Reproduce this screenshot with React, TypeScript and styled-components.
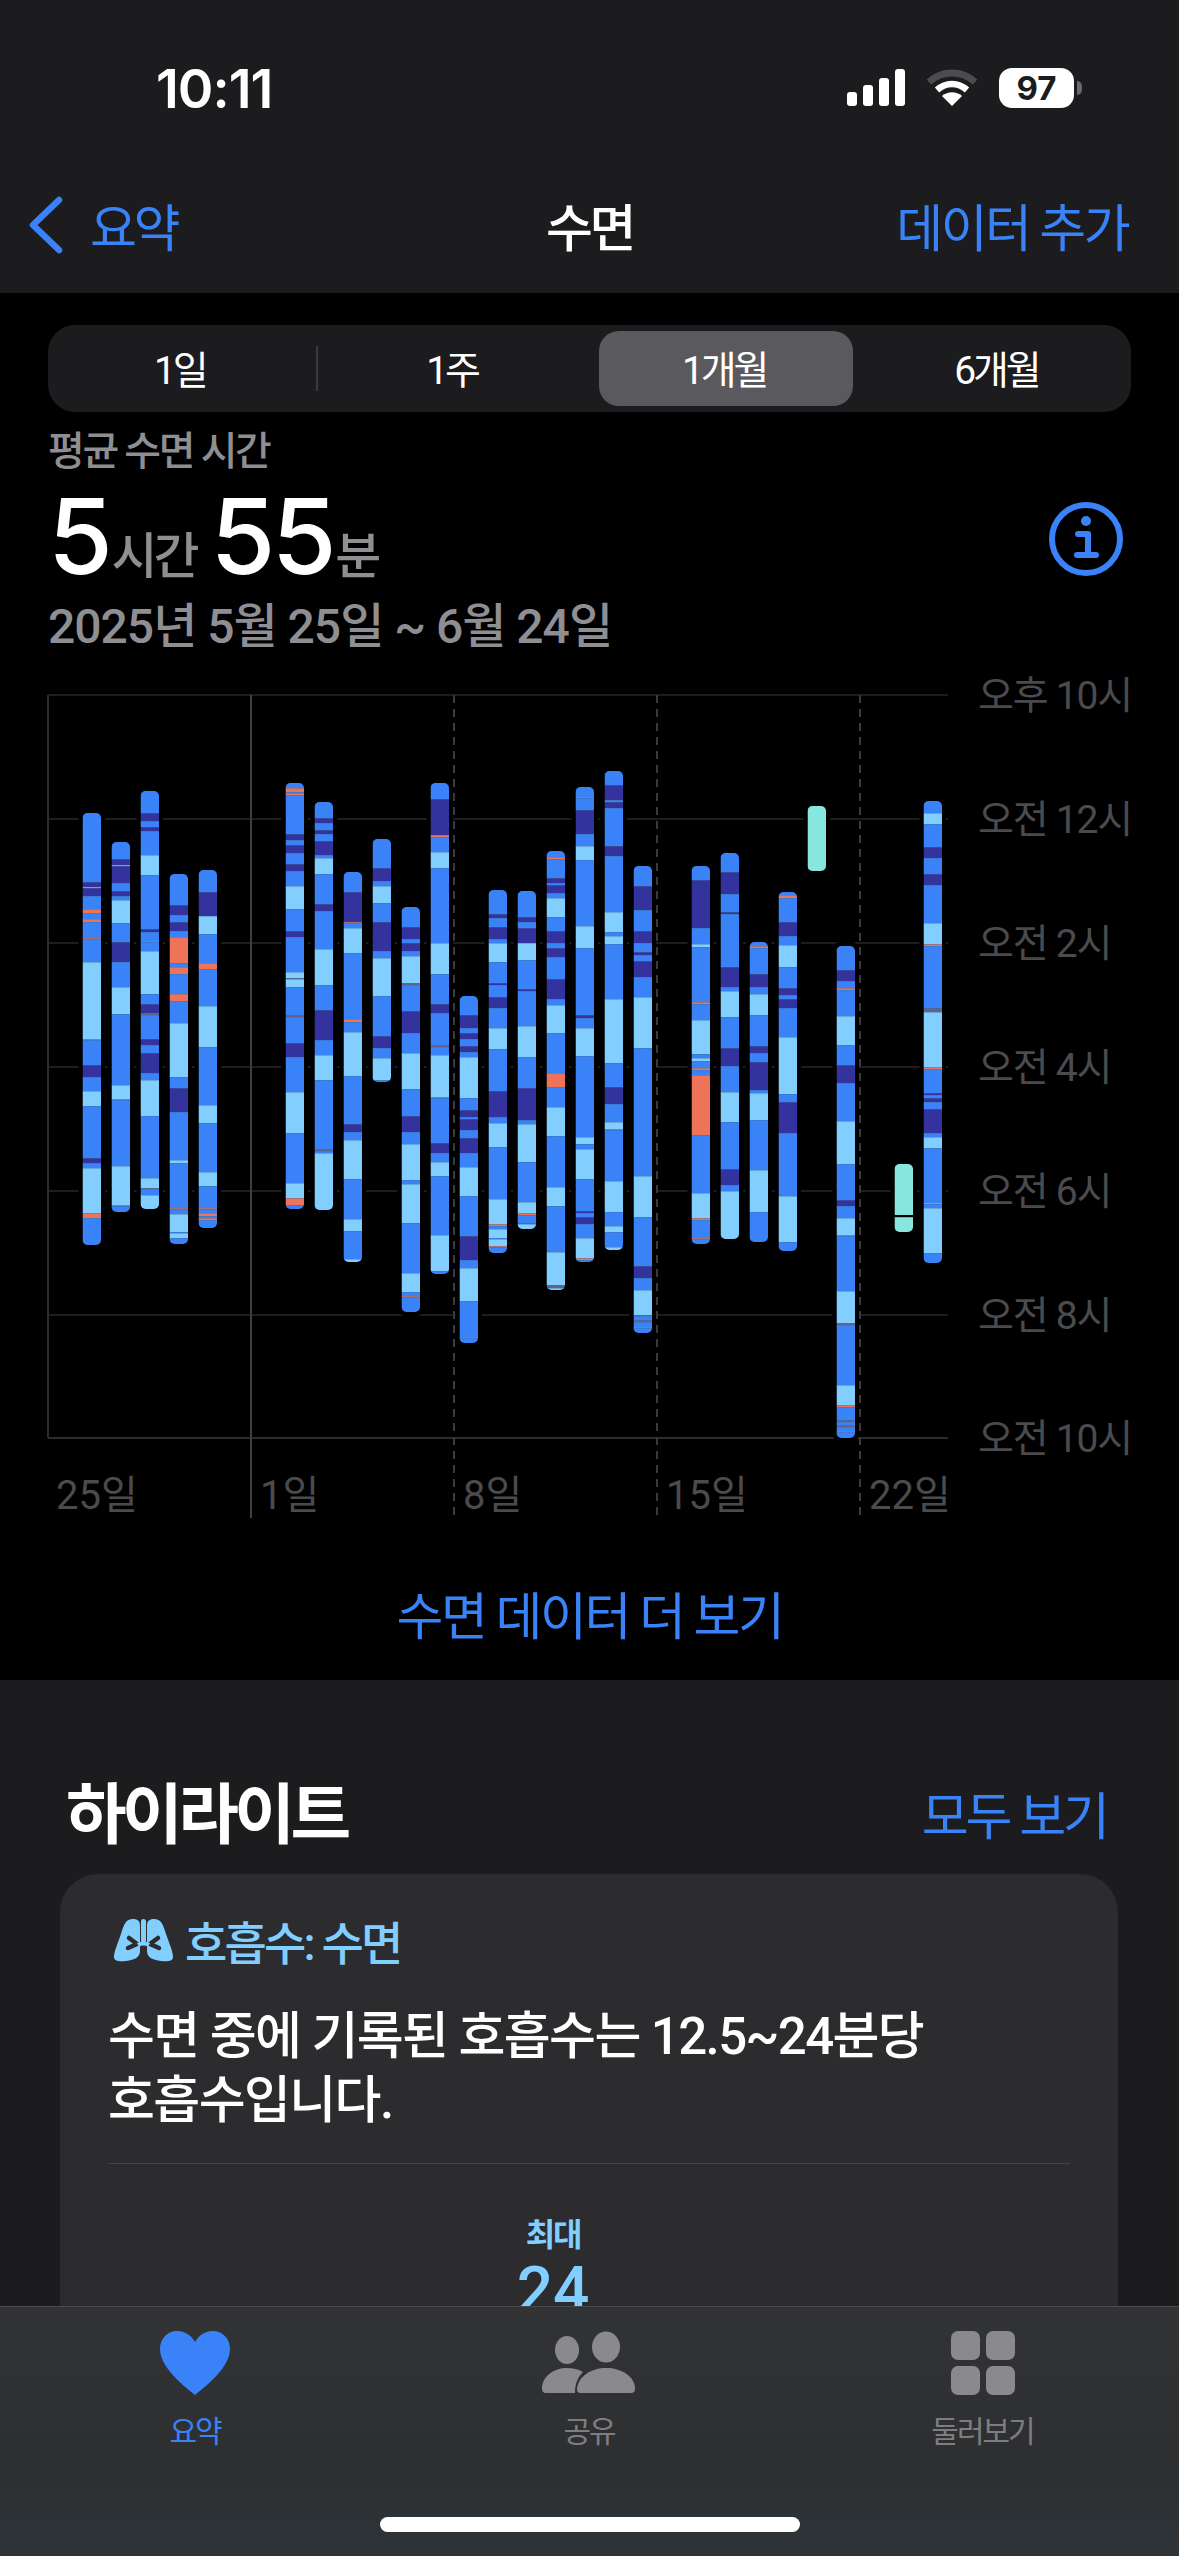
import React from "react";
import styled, { createGlobalStyle } from "styled-components";

const GlobalStyle = createGlobalStyle`
  html, body { margin: 0; padding: 0; background: #000; }
  body { font-family: Roboto, "Noto Sans CJK KR", sans-serif; }
`;

const BLUE = "#3a82f7";
const SKY = "#82cefe";

const Screen = styled.div`
  position: relative;
  width: 1179px;
  height: 2556px;
  overflow: hidden;
  background: #1c1c1e;
  color: #fff;
`;

const TopChrome = styled.header`
  height: 293px;
  background: #1c1c1e;
  box-sizing: border-box;
  padding-top: 62px;
`;
const StatusBar = styled.div`
  display: flex;
  align-items: center;
  justify-content: space-between;
  height: 52px;
  padding: 0 98px 0 156px;
`;
const Clock = styled.span`
  font-family: Inter, Roboto, sans-serif;
  font-size: 54px;
  font-weight: 600;
  letter-spacing: -1px;
`;
const StatusIcons = styled.div`
  display: flex;
  align-items: center;
  gap: 21px;
`;
const Battery = styled.div`
  position: relative;
  width: 75px;
  height: 40px;
  border-radius: 13px;
  background: #fff;
  color: #1c1c1e;
  font-family: Inter, sans-serif;
  font-size: 33px;
  font-weight: 700;
  line-height: 40px;
  text-align: center;
  margin-right: 7px;
  &::after {
    content: "";
    position: absolute;
    right: -8px;
    top: 13px;
    width: 5px;
    height: 14px;
    border-radius: 0 6px 6px 0;
    background: #6a6a6c;
  }
`;
const NavBar = styled.nav`
  display: grid;
  grid-template-columns: 1fr auto 1fr;
  align-items: center;
  margin-top: 74px;
  padding: 0 51px;
  height: 62px;
`;
const NavBack = styled.a`
  display: flex;
  align-items: center;
  gap: 26px;
  margin-left: -23px;
  color: ${BLUE};
  font-size: 51px;
  letter-spacing: -3.4px;
`;
const NavTitle = styled.span`
  font-size: 51px;
  font-weight: 500;
  letter-spacing: -3.4px;
`;
const NavAction = styled.a`
  justify-self: end;
  color: ${BLUE};
  font-size: 51px;
  letter-spacing: -2.6px;
`;

const Main = styled.main`
  height: 1387px;
  background: #000;
  box-sizing: border-box;
  padding-top: 32px;
`;
const Segments = styled.div`
  display: grid;
  grid-template-columns: repeat(4, 1fr);
  gap: 18px;
  width: 1083px;
  height: 87px;
  box-sizing: border-box;
  margin-left: 48px;
  padding: 6px;
  border-radius: 27px;
  background: #1c1c1e;
`;
const Segment = styled.div<{ $active?: boolean; $divider?: boolean }>`
  position: relative;
  display: flex;
  align-items: center;
  justify-content: center;
  border-radius: 20px;
  padding: 0 3px 3px 0;
  font-size: 39px;
  letter-spacing: -3.2px;
  background: ${(p) => (p.$active ? "#5a5a5e" : "transparent")};
  &::after {
    content: "";
    display: ${(p) => (p.$divider ? "block" : "none")};
    position: absolute;
    right: -10px;
    top: 15px;
    width: 2px;
    height: 45px;
    background: #3a3a3c;
  }
`;
const Summary = styled.section`
  position: relative;
  padding: 15px 48px 0;
`;
const SummaryLabel = styled.div`
  color: #8e8e93;
  font-size: 40px;
  font-weight: 500;
  line-height: 50px;
  letter-spacing: -2.4px;
`;
const Duration = styled.div`
  display: flex;
  align-items: baseline;
  height: 112px;
  line-height: 118px;
`;
const BigNumber = styled.span<{ $gap?: number }>`
  font-family: Inter, Roboto, sans-serif;
  font-size: 105px;
  font-weight: 500;
  margin-left: ${(p) => p.$gap ?? 0}px;
  letter-spacing: -3.5px;
`;
const Unit = styled.span`
  color: #8e8e93;
  font-size: 50px;
  font-weight: 500;
  letter-spacing: -4px;
  margin-left: 2px;
`;
const DateRange = styled.div`
  color: #8e8e93;
  font-size: 48px;
  font-weight: 500;
  line-height: 56px;
  margin-top: 10px;
  letter-spacing: -1px;
`;
const InfoButton = styled.svg`
  position: absolute;
  right: 55px;
  top: 89px;
  width: 76px;
  height: 76px;
`;

const ChartFrame = styled.svg`
  display: block;
  margin-top: 16px;
`;
const AxisText = styled.text<{ $day?: boolean }>`
  fill: #4b4b4d;
  font-size: ${(p) => (p.$day ? 40 : 39)}px;
  letter-spacing: ${(p) => (p.$day ? 0 : -1.2)}px;
`;
const DataLink = styled.a`
  display: block;
  margin-top: 57px;
  text-align: center;
  color: ${BLUE};
  font-size: 51px;
  line-height: 60px;
  letter-spacing: -2.5px;
`;

const Highlights = styled.section`
  padding: 91px 61px 0 60px;
`;
const HighlightHead = styled.div`
  display: flex;
  align-items: center;
  justify-content: space-between;
  height: 76px;
  padding: 0 11px 0 6px;
`;
const HighlightTitle = styled.h2`
  margin: 0;
  font-size: 66px;
  font-weight: 700;
  letter-spacing: -4.6px;
`;
const SeeAll = styled.a`
  color: ${BLUE};
  font-size: 51px;
  letter-spacing: -3px;
  padding-top: 8px;
`;
const Card = styled.article`
  height: 640px;
  margin-top: 27px;
  box-sizing: border-box;
  padding: 44px 48px 0;
  border-radius: 38px;
  background: #2c2c2e;
`;
const CardTag = styled.div`
  display: flex;
  align-items: center;
  gap: 11px;
  height: 44px;
  margin-left: 5px;
  color: ${SKY};
  font-size: 46px;
  font-weight: 500;
  letter-spacing: -2.8px;
`;
const CardBody = styled.p`
  margin: 43px 0 0;
  height: 128px;
  font-size: 51px;
  font-weight: 500;
  line-height: 64px;
  letter-spacing: -1.6px;
  padding-bottom: 30px;
  border-bottom: 1px solid #454547;
`;
const StatBlock = styled.div`
  display: flex;
  flex-direction: column;
  align-items: center;
  width: 890px;
  margin-top: 51px;
  color: ${SKY};
`;
const StatLabel = styled.div`
  font-size: 32px;
  font-weight: 700;
  letter-spacing: -2.2px;
  line-height: 40px;
`;
const StatValue = styled.div`
  font-size: 64px;
  font-weight: 500;
  line-height: 70px;
  margin-top: 1px;
`;

const TabBar = styled.footer`
  position: absolute;
  left: 0;
  right: 0;
  bottom: 0;
  height: 250px;
  box-sizing: border-box;
  padding-top: 24px;
  border-top: 1px solid #4a4a4c;
  background: linear-gradient(180deg, #323335 0%, #2d2f31 60%, #2e3439 100%);
  display: grid;
  grid-template-columns: 390px 398px 389px;
`;
const Tab = styled.div<{ $active?: boolean }>`
  display: flex;
  flex-direction: column;
  align-items: center;
  color: ${(p) => (p.$active ? BLUE : "#7e7e82")};
  font-size: 30px;
  letter-spacing: -2px;
  svg { display: block; margin-bottom: 12px; }
`;
const HomeIndicator = styled.div`
  position: absolute;
  left: 380px;
  bottom: 24px;
  width: 420px;
  height: 15px;
  border-radius: 8px;
  background: #fff;
`;

const STAGE: Record<string, string> = {
  B: "#3a82f7",
  L: "#82cefe",
  D: "#34329c",
  R: "#ef7358",
  G: "#5f6390",
  T: "#87e6dd",
  K: "#000",
};

// one night per entry: day index, bedtime y, then stage + the y where it ends
const NIGHTS: [number, number, string][] = [
  [0, 812, "B881 D886 L887 D895 B908 R912 B918 R921 B937 R938 B961 L1038 R1039 B1064 D1076 B1090 L1105 B1157 D1162 B1167 L1212 R1217 B1244"],
  [1, 841, "B858 D864 L865 D882 B890 D895 B899 L922 B941 D961 B986 L1013 B1084 L1098 R1099 B1165 L1204 R1205 B1211"],
  [2, 790, "B812 D820 B826 D830 B854 L874 B928 D931 B940 R941 B950 L993 B1003 D1012 G1014 B1038 D1044 B1052 D1072 B1079 L1115 B1177 L1187 G1188 B1194 L1208"],
  [3, 873, "B904 D914 B921 D930 B936 R962 B966 R973 B993 R1000 B1022 L1076 B1087 D1111 B1159 L1162 B1207 R1208 B1213 L1231 B1232 L1237 B1243"],
  [4, 869, "B891 D915 L933 B962 R968 B1005 L1046 B1104 L1122 B1171 L1185 B1207 R1208 B1212 R1215 B1217 R1219 B1227"],
  [7, 782, "B787 R791 B792 R794 B833 D839 B844 D852 B863 D870 B885 L908 B930 D936 B971 L977 G978 L986 B1014 G1016 B1042 D1056 B1091 L1132 B1182 L1197 R1204 B1208"],
  [8, 801, "B817 D822 B829 D833 B840 D854 B857 L873 B903 D910 B948 L984 B1009 D1039 B1054 L1079 B1148 G1150 B1152 L1209"],
  [9, 871, "B891 D921 R922 B927 L952 B1018 R1021 B1031 L1075 B1123 D1131 B1139 L1178 B1218 L1230 B1258 L1261"],
  [10, 838, "B867 D880 B885 L902 B921 D950 B957 L995 B1035 D1047 B1057 L1079 B1081"],
  [11, 906, "B926 D938 B942 D950 B955 L982 G984 B1010 D1032 B1052 L1088 B1115 D1131 B1143 L1179 B1183 L1222 B1272 L1291 B1295 R1296 B1311"],
  [12, 782, "B798 D834 R836 B851 L867 B942 L973 B1003 D1012 B1044 G1046 B1054 L1096 R1097 B1142 D1152 B1161 L1175 B1234 L1270 B1273"],
  [13, 995, "B1014 D1027 B1032 D1038 B1045 D1051 B1056 L1097 B1109 D1116 B1118 D1129 B1137 D1152 B1166 L1195 B1235 D1259 B1267 L1300 B1336 R1337 B1342"],
  [14, 889, "B913 D917 B926 D938 B942 L961 B982 D984 B996 D1007 B1027 L1048 B1090 D1116 B1122 L1146 B1198 L1223 R1225 B1228 L1237 B1238 L1245 R1246 B1252"],
  [15, 890, "B916 D921 B927 D942 L959 B988 D990 B1025 L1056 B1087 D1119 B1123 L1161 B1201 L1212 R1214 B1222 G1223 L1228"],
  [16, 850, "B856 R858 B877 D882 B884 D892 B897 L916 B930 D942 B947 D956 B978 D998 B1004 L1032 B1072 R1086 B1106 L1135 B1186 L1205 B1251 L1284 G1287 L1289"],
  [17, 786, "B796 R797 B809 D833 B845 L859 B925 L947 B1014 D1017 B1027 L1055 B1136 L1143 B1148 L1178 B1210 D1212 B1216 D1223 B1237 L1257 R1259 B1261"],
  [18, 770, "B784 D799 B801 D807 B845 D855 B911 L931 B935 L943 B998 L1062 B1086 D1103 B1121 L1128 R1129 B1180 L1211 B1225 L1231 B1246 L1249"],
  [19, 865, "B885 D909 B930 D942 B951 D954 B960 D976 B996 L1047 B1175 L1216 B1265 D1277 B1289 L1314 G1315 B1319 G1321 B1326 R1327 B1332"],
  [21, 865, "B879 D927 B943 L946 B1001 R1003 B1019 L1053 B1057 L1060 B1067 R1069 B1074 R1134 B1192 L1217 R1219 B1237 R1238 B1243"],
  [22, 852, "B871 D893 B911 D913 B966 D986 B990 L1016 B1047 D1065 B1091 L1121 B1168 D1184 B1190 L1238"],
  [23, 941, "B945 R947 B973 D986 B993 L1014 B1045 D1052 B1061 D1089 B1092 L1119 B1169 L1211 B1241"],
  [24, 891, "B894 R897 B921 D935 B944 L966 B987 D994 B998 D1007 B1036 L1093 B1101 D1132 B1195 L1241 B1250"],
  [25, 805, "T870"],
  [26, 945, "B969 D980 B987 R989 B1015 L1044 B1064 D1082 B1120 L1163 B1199 D1205 B1217 L1234 R1235 B1290 L1322 G1324 B1384 L1404 R1406 B1419 G1421 B1424 G1426 B1430 R1431 B1437"],
  [28, 1163, "T1214 K1216 T1231"],
  [29, 800, "B812 L823 B846 D857 B873 D884 B922 L943 R945 B1007 G1011 L1066 R1068 B1092 D1094 B1097 D1101 B1108 D1132 B1136 L1147 B1202 L1203 B1207 L1252 B1262"],
];

const HOUR_LINES: [number, string][] = [
  [694, "오후 10시"],
  [818, "오전 12시"],
  [942, "오전 2시"],
  [1066, "오전 4시"],
  [1190, "오전 6시"],
  [1314, "오전 8시"],
  [1437, "오전 10시"],
];
const DAY_TICKS: [number, string, boolean][] = [
  [48, "25일", false],
  [251, "1일", true],
  [454, "8일", false],
  [657, "15일", false],
  [860, "22일", false],
];

const BAR_W = 18.5;
const dayX = (day: number) => 82.5 + day * 29;

function NightBar({ day, top, stages }: { day: number; top: number; stages: string }) {
  const x = dayX(day);
  const parts = stages.split(" ").map((s) => ({ code: s[0], end: Number(s.slice(1)) }));
  const bottom = parts[parts.length - 1].end;
  const clipId = `night-${day}`;
  let y = top;
  return (
    <g>
      <rect x={x - 4} y={top - 4} width={BAR_W + 8} height={bottom - top + 8} rx={8} fill="#000" />
      <clipPath id={clipId}>
        <rect x={x} y={top} width={BAR_W} height={bottom - top} rx={5} />
      </clipPath>
      <g clipPath={`url(#${clipId})`}>
        {parts.map((p, i) => {
          const from = y;
          y = p.end;
          return (
            <g key={i}>
              <rect x={x} y={from} width={BAR_W} height={p.end - from} fill={STAGE[p.code]} />
              {i > 0 && p.code !== "K" && (
                <rect x={x} y={from} width={BAR_W} height={1} fill="#3d6f9e" opacity={0.4} />
              )}
            </g>
          );
        })}
      </g>
    </g>
  );
}

function SleepChart() {
  return (
    <ChartFrame width={1179} height={860} viewBox="0 670 1179 860">
      {HOUR_LINES.map(([y, label], i) => (
        <g key={label}>
          <line x1={48} x2={948} y1={y} y2={y} stroke={i === 6 ? "#2c2c2e" : "#1d1d1f"} strokeWidth={2} />
          <AxisText x={978} y={y + 14}>{label}</AxisText>
        </g>
      ))}
      <line x1={48} x2={48} y1={694} y2={1437} stroke="#2c2c2e" strokeWidth={2} />
      {DAY_TICKS.map(([x, label, solid]) => (
        <g key={label}>
          {x !== 48 && (
            <line
              x1={x}
              x2={x}
              y1={694}
              y2={1517}
              stroke={solid ? "#3f3f41" : "#3a3a3c"}
              strokeWidth={2}
              strokeDasharray={solid ? undefined : "8 6"}
            />
          )}
          <AxisText $day x={x === 48 ? 56 : x + 9} y={1508}>{label}</AxisText>
        </g>
      ))}
      {NIGHTS.map(([day, top, stages]) => (
        <NightBar key={day} day={day} top={top} stages={stages} />
      ))}
    </ChartFrame>
  );
}

const SignalIcon = () => (
  <svg width="58" height="38" viewBox="0 0 58 38" fill="#fff">
    <rect x="0" y="23" width="10" height="14" rx="3" />
    <rect x="16" y="16" width="10" height="21" rx="3" />
    <rect x="32" y="9" width="10" height="28" rx="3" />
    <rect x="48" y="0" width="10" height="37" rx="3" />
  </svg>
);

const WifiIcon = () => (
  <svg width="52" height="38" viewBox="0 0 52 38" fill="none">
    <path d="M3 13 C16 1 36 1 49 13" stroke="#4c4c4e" strokeWidth="7" />
    <path d="M11 21 C20 13 32 13 41 21" stroke="#fff" strokeWidth="6.5" />
    <path d="M26 37 L16 27 C22 22 30 22 36 27 Z" fill="#fff" />
  </svg>
);

const LungIcon = () => (
  <svg width="61" height="44" viewBox="0 0 61 44">
    <path
      d="M20 1 C13 1 11 6 8 16 C5 25 1 33 1 39 C1 43 6 44 13 43 C22 42 27 39 27 33 L27 8 C27 3 25 1 20 1 Z"
      fill="#82cefe"
    />
    <path
      d="M41 1 C48 1 50 6 53 16 C56 25 60 33 60 39 C60 43 55 44 48 43 C39 42 34 39 34 33 L34 8 C34 3 36 1 41 1 Z"
      fill="#82cefe"
    />
    <rect x="28" y="1" width="5" height="24" rx="2.5" fill="#82cefe" />
    <path d="M16 20 L24 26 L15 30" fill="none" stroke="#2c2c2e" strokeWidth="4.5" strokeLinecap="round" />
    <path d="M45 20 L37 26 L46 30" fill="none" stroke="#2c2c2e" strokeWidth="4.5" strokeLinecap="round" />
    <path d="M25 27 C28 25 33 25 36 27" fill="none" stroke="#82cefe" strokeWidth="4" />
  </svg>
);

const HeartIcon = () => (
  <svg width="70" height="64" viewBox="0 0 70 64" fill={BLUE}>
    <path d="M35 64 C28 58 0 38 0 18 C0 7 8 0 17 0 C25 0 31 4 35 11 C39 4 45 0 53 0 C62 0 70 7 70 18 C70 38 42 58 35 64 Z" />
  </svg>
);

const PeopleIcon = () => (
  <svg width="94" height="64" viewBox="0 0 94 64" fill="#8a8a8e">
    <ellipse cx="25" cy="19" rx="12" ry="14" />
    <ellipse cx="64" cy="16" rx="14" ry="15.5" />
    <path d="M0 58 C0 45 12 37 25 37 C31 37 36 38 41 41 C36 46 33 52 33 62 L4 62 C1 62 0 60 0 58 Z" />
    <path d="M35 58 C36 45 50 37 64 37 C79 37 93 45 93 58 C93 61 91 62 89 62 L39 62 C36 62 35 61 35 58 Z" />
  </svg>
);

const BrowseIcon = () => (
  <svg width="64" height="64" viewBox="0 0 64 64" fill="#8a8a8e">
    <rect x="0" y="0" width="29" height="29" rx="7" />
    <rect x="35" y="0" width="29" height="29" rx="7" />
    <rect x="0" y="35" width="29" height="29" rx="7" />
    <rect x="35" y="35" width="29" height="29" rx="7" />
  </svg>
);

export default function App() {
  return (
    <>
      <GlobalStyle />
      <Screen>
        <TopChrome>
          <StatusBar>
            <Clock>10:11</Clock>
            <StatusIcons>
              <SignalIcon />
              <WifiIcon />
              <Battery>97</Battery>
            </StatusIcons>
          </StatusBar>
          <NavBar>
            <NavBack>
              <svg width="36" height="58" viewBox="0 0 36 58" fill="none">
                <path d="M31 4 L5 29 L31 54" stroke={BLUE} strokeWidth="6.5" strokeLinecap="round" strokeLinejoin="round" />
              </svg>
              요약
            </NavBack>
            <NavTitle>수면</NavTitle>
            <NavAction>데이터 추가</NavAction>
          </NavBar>
        </TopChrome>

        <Main>
          <Segments>
            <Segment $divider>1일</Segment>
            <Segment>1주</Segment>
            <Segment $active>1개월</Segment>
            <Segment>6개월</Segment>
          </Segments>

          <Summary>
            <SummaryLabel>평균 수면 시간</SummaryLabel>
            <Duration>
              <BigNumber>5</BigNumber>
              <Unit>시간</Unit>
              <BigNumber $gap={15}>55</BigNumber>
              <Unit>분</Unit>
            </Duration>
            <DateRange>2025년 5월 25일 ~ 6월 24일</DateRange>
            <InfoButton viewBox="0 0 76 76" fill="none">
              <circle cx="38" cy="38" r="34" stroke={BLUE} strokeWidth="6" />
              <circle cx="38" cy="20" r="5" fill={BLUE} />
              <path d="M30 33 H40 V53 M29 54 H48" stroke={BLUE} strokeWidth="6" strokeLinecap="round" strokeLinejoin="round" />
            </InfoButton>
          </Summary>

          <SleepChart />
          <DataLink>수면 데이터 더 보기</DataLink>
        </Main>

        <Highlights>
          <HighlightHead>
            <HighlightTitle>하이라이트</HighlightTitle>
            <SeeAll>모두 보기</SeeAll>
          </HighlightHead>
          <Card>
            <CardTag>
              <LungIcon />
              호흡수: 수면
            </CardTag>
            <CardBody>
              수면 중에 기록된 호흡수는 12.5~24분당
              <br />
              호흡수입니다.
            </CardBody>
            <StatBlock>
              <StatLabel>최대</StatLabel>
              <StatValue>24</StatValue>
            </StatBlock>
          </Card>
        </Highlights>

        <TabBar>
          <Tab $active>
            <HeartIcon />
            요약
          </Tab>
          <Tab>
            <PeopleIcon />
            공유
          </Tab>
          <Tab>
            <BrowseIcon />
            둘러보기
          </Tab>
        </TabBar>
        <HomeIndicator />
      </Screen>
    </>
  );
}
